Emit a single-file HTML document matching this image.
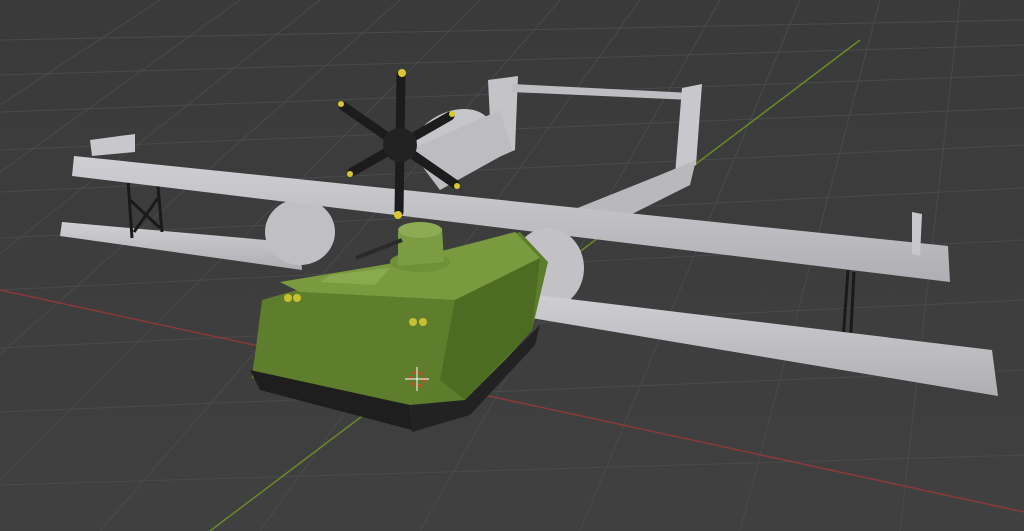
<!DOCTYPE html>
<html><head><meta charset="utf-8"><style>
html,body{margin:0;padding:0;background:#3d3d3d;width:1024px;height:531px;overflow:hidden}
svg{display:block}
</style></head><body>
<svg width="1024" height="531" viewBox="0 0 1024 531" xmlns="http://www.w3.org/2000/svg">
<defs>
<linearGradient id="bg" x1="0" y1="0" x2="0" y2="1"><stop offset="0" stop-color="#3a3a3a"/><stop offset="1" stop-color="#404040"/></linearGradient>
<linearGradient id="wing" x1="0" y1="0" x2="0" y2="1"><stop offset="0" stop-color="#d0d0d4"/><stop offset="1" stop-color="#aeaeb3"/></linearGradient>
</defs>
<rect width="1024" height="531" fill="url(#bg)"/>
<g stroke="#4a4a4a" stroke-width="1" fill="none">
<path d="M0 40 L1024 20 M0 75 L1024 45 M0 112 L1024 75 M0 150 L1024 108 M0 192 L1024 145 M0 238 L1024 188 M0 290 L1024 240 M0 348 L1024 300 M0 412 L1024 370 M0 485 L1024 455"/>
<path d="M-200 531 L400 0 M-50 531 L480 0 M100 531 L560 0 M260 531 L640 0 M420 531 L720 0 M580 531 L800 0 M740 531 L880 0 M900 531 L960 0 M1060 531 L1040 0 M1220 531 L1120 0 M-350 531 L320 0 M-500 531 L240 0 M-650 531 L160 0"/>
</g>
<path d="M0 290 L1024 512" stroke="#8a3a3a" stroke-width="1.5"/>
<path d="M210 531 L860 40" stroke="#6a8a2a" stroke-width="1.5"/>
<!-- lower left wing -->
<polygon points="62,222 300,243 302,270 60,236" fill="url(#wing)"/>
<!-- struts -->
<g stroke="#1a1a1a" stroke-width="3"><path d="M128 180 L132 238 M158 186 L162 232 M130 200 L160 228 M158 198 L134 232 M848 270 L842 355 M854 272 L850 350"/></g>
<!-- tail -->
<polygon points="488,80 518,76 515,150 492,160" fill="#c4c4c8"/>
<polygon points="512,84 692,93 692,100 512,92" fill="#bdbdc2"/>
<polygon points="682,88 702,84 696,165 675,175" fill="#c8c8cc"/>
<polygon points="560,215 660,175 696,160 690,185 610,225" fill="#b8b8bd"/>
<!-- nacelle -->
<ellipse cx="452" cy="140" rx="42" ry="28" fill="#c6c6ca" transform="rotate(-25 452 140)"/>
<polygon points="410,150 500,110 512,150 440,190" fill="#bcbcc1"/>
<!-- left pod -->
<ellipse cx="300" cy="232" rx="35" ry="33" fill="#c0c0c4"/>
<!-- upper wing -->
<polygon points="74,156 948,246 950,282 72,176" fill="url(#wing)"/>
<polygon points="90,140 135,134 135,152 92,156" fill="#c8c8cc"/>
<polygon points="912,212 922,214 920,256 912,254" fill="#c8c8cc"/>
<!-- right pod -->
<ellipse cx="548" cy="268" rx="36" ry="40" fill="#c2c2c6"/>
<!-- lower right wing -->
<polygon points="495,290 992,350 998,396 495,312" fill="url(#wing)"/>
<!-- tank -->
<polygon points="262,300 395,262 520,232 548,262 532,330 465,405 405,418 252,378 255,355" fill="#5d7c2c"/>
<polygon points="280,282 400,262 515,232 540,258 455,300 300,292" fill="#7a9a40"/>
<polygon points="300,292 455,300 440,380 410,408 252,375 262,310" fill="#5f7e2d"/>
<polygon points="455,300 540,258 532,330 465,400 440,380" fill="#4e6b22"/>
<polygon points="250,370 410,405 412,430 260,390" fill="#1e1e1e"/>
<polygon points="410,405 465,400 540,325 535,345 470,415 412,432" fill="#222"/>
<polygon points="330,275 390,268 375,285 320,282" fill="#8aaa50"/>
<circle cx="288" cy="298" r="4" fill="#c8c030"/><circle cx="297" cy="298" r="4" fill="#c8c030"/>
<circle cx="413" cy="322" r="4" fill="#c8c030"/><circle cx="423" cy="322" r="4" fill="#c8c030"/>
<!-- turret -->
<ellipse cx="420" cy="262" rx="30" ry="10" fill="#6f9036"/>
<polygon points="398,232 442,228 444,262 398,266" fill="#7c9c44"/>
<ellipse cx="420" cy="230" rx="22" ry="8" fill="#8cab52"/>
<path d="M356 258 L402 240" stroke="#2a2a2a" stroke-width="4"/>
<!-- propeller -->
<g stroke="#1c1c1c" stroke-width="9" stroke-linecap="round">
<path d="M401 75 L399 212 M343 106 L455 184 M352 172 L450 116"/>
</g>
<circle cx="400" cy="145" r="17" fill="#222"/>
<circle cx="402" cy="73" r="4" fill="#d8c830"/><circle cx="398" cy="215" r="4" fill="#d8c830"/>
<circle cx="341" cy="104" r="3" fill="#d8c830"/><circle cx="457" cy="186" r="3" fill="#d8c830"/>
<circle cx="350" cy="174" r="3" fill="#d8c830"/><circle cx="452" cy="114" r="3" fill="#d8c830"/>
<!-- 3d cursor -->
<circle cx="417" cy="379" r="7" fill="none" stroke="#e04020" stroke-width="2" stroke-dasharray="4 3"/>
<path d="M405 379 H429 M417 367 V391" stroke="#fff" stroke-width="1"/>
</svg>
</body></html>
